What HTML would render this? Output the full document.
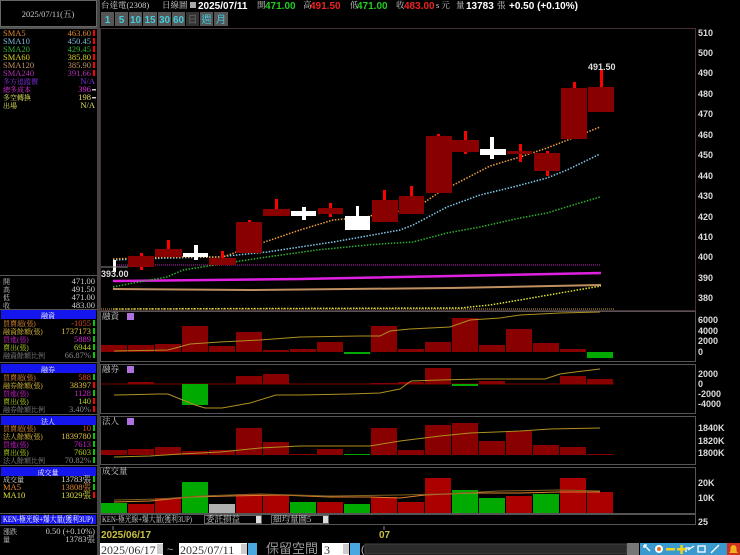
<!DOCTYPE html>
<html><head><meta charset="utf-8"><style>
html,body{margin:0;padding:0;background:#000;width:740px;height:555px;overflow:hidden}
svg{display:block}
.s{font-family:"Liberation Serif","Noto Serif CJK TC",serif;font-size:8.5px}
.l{font-size:7px}
.b{font-family:"Liberation Sans","Noto Sans CJK TC",sans-serif;font-weight:bold;font-size:10px}
.ax{font-family:"Liberation Sans",sans-serif;font-weight:bold;font-size:9px;fill:#ddd}
</style></head><body>
<svg width="740" height="555" viewBox="0 0 740 555" xmlns="http://www.w3.org/2000/svg">
<rect width="740" height="555" fill="#000"/>
<rect x="0.5" y="0.5" width="96" height="26" fill="#000" stroke="#666"/>
<text x="48" y="17" class="s" fill="#ccc" text-anchor="middle">2025/07/11(五)</text>
<rect x="97" y="0" width="3" height="555" fill="#444"/>
<rect x="0" y="27" width="97" height="2" fill="#555"/>
<g class="s">
<text x="3" y="36" fill="#e08a30">SMA5</text><text x="91" y="36" fill="#e08a30" text-anchor="end">463.60</text>
<text x="3" y="44" fill="#7ab8d8">SMA10</text><text x="91" y="44" fill="#7ab8d8" text-anchor="end">450.45</text>
<text x="3" y="52" fill="#30b030">SMA20</text><text x="91" y="52" fill="#30b030" text-anchor="end">429.45</text>
<text x="3" y="60" fill="#d8d020">SMA60</text><text x="91" y="60" fill="#d8d020" text-anchor="end">385.80</text>
<text x="3" y="68" fill="#c09060">SMA120</text><text x="91" y="68" fill="#c09060" text-anchor="end">385.90</text>
<text x="3" y="76" fill="#b030b0">SMA240</text><text x="91" y="76" fill="#b030b0" text-anchor="end">391.66</text>
<text x="3" y="84" class="l" fill="#8030e0">多方追蹤價</text><text x="95" y="84" fill="#8030e0" text-anchor="end">N/A</text>
<text x="3" y="92" class="l" fill="#e030e0">總多成本</text><text x="91" y="92" fill="#e030e0" text-anchor="end">396</text>
<text x="3" y="100" class="l" fill="#e0e060">多空轉換</text><text x="91" y="100" fill="#e0e060" text-anchor="end">198</text>
<text x="3" y="108" class="l" fill="#e0e060">出場</text><text x="95" y="108" fill="#e0e060" text-anchor="end">N/A</text>
</g>
<g fill="#f00"><rect x="93" y="30" width="2" height="6"/><rect x="93" y="38" width="2" height="6"/><rect x="93" y="46" width="2" height="6"/><rect x="93" y="54" width="2" height="6"/><rect x="93" y="62" width="2" height="6"/><rect x="93" y="70" width="2" height="6"/></g>
<rect x="92" y="89" width="4" height="1.5" fill="#ccc"/><rect x="92" y="97" width="4" height="1.5" fill="#ccc"/>

<rect x="0" y="275" width="97" height="1" fill="#555"/>
<g class="s" fill="#ccc">
<text x="3" y="284" class="l">開</text><text x="95" y="284" text-anchor="end">471.00</text>
<text x="3" y="292" class="l">高</text><text x="95" y="292" text-anchor="end">491.50</text>
<text x="3" y="300" class="l">低</text><text x="95" y="300" text-anchor="end">471.00</text>
<text x="3" y="308" class="l">收</text><text x="95" y="308" text-anchor="end">483.00</text>
</g>
<g fill="#1515ee">
<rect x="1" y="310" width="95" height="9"/><rect x="1" y="364" width="95" height="9"/><rect x="1" y="416" width="95" height="9"/><rect x="1" y="467" width="95" height="9"/><rect x="1" y="515" width="95" height="9"/>
</g>
<g stroke="#555"><line x1="0" y1="309.5" x2="97" y2="309.5"/><line x1="0" y1="362.5" x2="97" y2="362.5"/><line x1="0" y1="414.5" x2="97" y2="414.5"/><line x1="0" y1="465.5" x2="97" y2="465.5"/><line x1="0" y1="513.5" x2="97" y2="513.5"/><line x1="0" y1="525.5" x2="97" y2="525.5"/></g>
<g class="s l" fill="#fff" text-anchor="middle">
<text x="48" y="318">融資</text><text x="48" y="372">融券</text><text x="48" y="424">法人</text><text x="48" y="475">成交量</text>
</g>
<text x="3" y="522" class="s" fill="#fff" font-size="7" textLength="90" lengthAdjust="spacingAndGlyphs">KEN-極光線+爆大量(獲利3UP)</text>
<g class="s">
<text x="3" y="326" class="l" fill="#e08a30">買賣超(張)</text><text x="91" y="326" fill="#e05020" text-anchor="end">-1055</text>
<text x="3" y="334" class="l" fill="#e0c040">融資餘額(張)</text><text x="91" y="334" fill="#e0c040" text-anchor="end">1737173</text>
<text x="3" y="342" class="l" fill="#d020d0">買進(張)</text><text x="91" y="342" fill="#d020d0" text-anchor="end">5889</text>
<text x="3" y="350" class="l" fill="#b0d020">賣出(張)</text><text x="91" y="350" fill="#b0d020" text-anchor="end">6944</text>
<text x="3" y="358" class="l" fill="#888">融資餘額比例</text><text x="91" y="358" fill="#888" text-anchor="end">66.87%</text>
<text x="3" y="380" class="l" fill="#e08a30">買賣超(張)</text><text x="91" y="380" fill="#e05020" text-anchor="end">588</text>
<text x="3" y="388" class="l" fill="#e0c040">融券餘額(張)</text><text x="91" y="388" fill="#e0c040" text-anchor="end">38397</text>
<text x="3" y="396" class="l" fill="#d020d0">買進(張)</text><text x="91" y="396" fill="#d020d0" text-anchor="end">1128</text>
<text x="3" y="404" class="l" fill="#b0d020">賣出(張)</text><text x="91" y="404" fill="#b0d020" text-anchor="end">140</text>
<text x="3" y="412" class="l" fill="#888">融券餘額比例</text><text x="91" y="412" fill="#888" text-anchor="end">3.40%</text>
<text x="3" y="431" class="l" fill="#e08a30">買賣超(張)</text><text x="91" y="431" fill="#e05020" text-anchor="end">10</text>
<text x="3" y="439" class="l" fill="#e0c040">法人餘額(張)</text><text x="91" y="439" fill="#e0c040" text-anchor="end">1839780</text>
<text x="3" y="447" class="l" fill="#d020d0">買進(張)</text><text x="91" y="447" fill="#d020d0" text-anchor="end">7613</text>
<text x="3" y="455" class="l" fill="#b0d020">賣出(張)</text><text x="91" y="455" fill="#b0d020" text-anchor="end">7603</text>
<text x="3" y="463" class="l" fill="#888">法人餘額比例</text><text x="91" y="463" fill="#888" text-anchor="end">70.82%</text>
<text x="3" y="482" class="l" fill="#ddd">成交量</text><text x="91" y="482" fill="#ddd" text-anchor="end">13783張</text>
<text x="3" y="490" fill="#e08a30">MA5</text><text x="91" y="490" fill="#e08a30" text-anchor="end">13808張</text>
<text x="3" y="498" fill="#e0e040">MA10</text><text x="91" y="498" fill="#e0e040" text-anchor="end">13029張</text>
<text x="3" y="534" class="l" fill="#ccc">漲跌</text><text x="95" y="534" fill="#ccc" text-anchor="end">0.50 (+0.10%)</text>
<text x="3" y="542" class="l" fill="#ccc">量</text><text x="95" y="542" fill="#ccc" text-anchor="end">13783張</text>
</g>
<g fill="#0c0"><rect x="93" y="320" width="2" height="6"/><rect x="93" y="328" width="2" height="6"/><rect x="93" y="336" width="2" height="6"/><rect x="93" y="344" width="2" height="6"/><rect x="93" y="352" width="2" height="6"/><rect x="93" y="374" width="2" height="6"/><rect x="93" y="390" width="2" height="6"/><rect x="93" y="425" width="2" height="6"/><rect x="93" y="433" width="2" height="6"/><rect x="93" y="441" width="2" height="6"/><rect x="93" y="449" width="2" height="6"/><rect x="93" y="457" width="2" height="6"/><rect x="93" y="476" width="2" height="6"/><rect x="93" y="484" width="2" height="6"/></g>
<g fill="#f00"><rect x="93" y="382" width="2" height="6"/><rect x="93" y="398" width="2" height="6"/><rect x="93" y="406" width="2" height="6"/><rect x="93" y="492" width="2" height="6"/></g>

<g class="s" fill="#ccc"><text x="101" y="8">台達電(2308)</text><text x="162" y="8">日線圖</text></g>
<rect x="190" y="2" width="6" height="6" fill="#aaa"/>
<text x="198" y="9" class="b" fill="#fff">2025/07/11</text>
<text x="257" y="8" class="s" fill="#ccc">開</text><text x="265" y="9" class="b" fill="#2c2">471.00</text>
<text x="303" y="8" class="s" fill="#ccc">高</text><text x="310" y="9" class="b" fill="#e22">491.50</text>
<text x="350" y="8" class="s" fill="#ccc">低</text><text x="357" y="9" class="b" fill="#2c2">471.00</text>
<text x="396" y="8" class="s" fill="#ccc">收</text><text x="404" y="9" class="b" fill="#e22">483.00</text>
<text x="436" y="8" class="s" fill="#ccc">s 元</text>
<text x="456" y="8" class="s" fill="#ccc">量</text><text x="466" y="9" class="b" fill="#fff">13783</text>
<text x="497" y="8" class="s" fill="#ccc">張</text>
<text x="509" y="9" class="b" fill="#fff">+0.50 (+0.10%)</text>
<g fill="#555">
<rect x="101" y="12" width="13" height="14"/><rect x="115" y="12" width="13" height="14"/><rect x="129" y="12" width="13" height="14"/><rect x="143" y="12" width="14" height="14"/><rect x="158" y="12" width="13" height="14"/><rect x="172" y="12" width="13" height="14"/><rect x="186" y="12" width="13" height="14" fill="#333"/><rect x="200" y="12" width="13" height="14"/><rect x="214" y="12" width="14" height="14"/>
</g>
<g class="b" fill="#4cd" text-anchor="middle" font-size="9">
<text x="107.5" y="23">1</text><text x="121.5" y="23">5</text><text x="135.5" y="23">10</text><text x="150" y="23">15</text><text x="164.5" y="23">30</text><text x="178.5" y="23">60</text><text x="192.5" y="23" fill="#555">日</text><text x="206.5" y="23" font-weight="normal">週</text><text x="221" y="23" font-weight="normal">月</text>
</g>

<rect x="100.5" y="28.5" width="595" height="282" fill="none" stroke="#4a3036"/>
<g class="ax">
<text x="698" y="36">510</text><text x="698" y="56">500</text><text x="698" y="76">490</text><text x="698" y="97">480</text><text x="698" y="117">470</text><text x="698" y="138">460</text><text x="698" y="158">450</text><text x="698" y="179">440</text><text x="698" y="199">430</text><text x="698" y="220">420</text><text x="698" y="240">410</text><text x="698" y="260">400</text><text x="698" y="281">390</text><text x="698" y="301">380</text>
</g>
<line x1="113" y1="265" x2="601" y2="265" stroke="#801880" stroke-width="1.5" stroke-dasharray="1 1"/>
<polyline points="113,281 300,279 601,273" fill="none" stroke="#e020e0" stroke-width="2.5"/>
<polyline points="113,289 250,290 450,288 601,285" fill="none" stroke="#c09060" stroke-width="2"/>
<polyline points="113,309 460,308 490,305 520,300 560,293 601,286" fill="none" stroke="#e0e030" stroke-width="1.5" stroke-dasharray="1.5 1.5"/>
<polyline points="113,287 133,283 167,277 183,270 227,263 267,257 317,250 367,245 380,244 413,242 447,233 480,227 520,218 547,213 573,205 600,197" fill="none" stroke="#30b030" stroke-width="1.5" stroke-dasharray="1.5 1.5"/>
<polyline points="113,260 167,258 217,257 267,252 333,242 367,236 400,230 413,225 447,207 480,195 513,187 547,178 567,170 600,154" fill="none" stroke="#80c8e8" stroke-width="1.5" stroke-dasharray="1.5 1.5"/>
<polyline points="113,259 167,257 223,257 250,247 300,230 333,220 367,217 380,213 412,210 425,202 438,193 463,180 490,166 520,157 547,148 573,138 600,127" fill="none" stroke="#f0a040" stroke-width="1.5" stroke-dasharray="1.5 1.5"/>
<g fill="#f00">
<rect x="140" y="253" width="3" height="17"/><rect x="167" y="240" width="3" height="10"/><rect x="221" y="251" width="3" height="8"/><rect x="248" y="220" width="3" height="3"/><rect x="275" y="199" width="3" height="11"/><rect x="329" y="203" width="3" height="14"/><rect x="383" y="190" width="3" height="11"/><rect x="410" y="186" width="3" height="11"/><rect x="437" y="134" width="3" height="3"/><rect x="464" y="131" width="3" height="23"/><rect x="519" y="144" width="3" height="18"/><rect x="546" y="151" width="3" height="25"/><rect x="573" y="82" width="3" height="7"/><rect x="600" y="70" width="3" height="18"/>
</g>
<g fill="#880000">
<rect x="128" y="256" width="26" height="11"/><rect x="155" y="249" width="27" height="8"/><rect x="209" y="258" width="27" height="7"/><rect x="236" y="222" width="26" height="31"/><rect x="263" y="209" width="27" height="7"/><rect x="318" y="208" width="25" height="6"/><rect x="372" y="200" width="26" height="22"/><rect x="399" y="196" width="25" height="18"/><rect x="426" y="136" width="26" height="57"/><rect x="452" y="140" width="27" height="12"/><rect x="507" y="151" width="25" height="3"/><rect x="534" y="153" width="26" height="18"/><rect x="561" y="88" width="26" height="51"/><rect x="588" y="87" width="26" height="25"/>
</g>
<g fill="#fff">
<rect x="113" y="260" width="3" height="12"/>
<rect x="183" y="253" width="25" height="4"/><rect x="194" y="245" width="4" height="15"/>
<rect x="291" y="211" width="25" height="5"/><rect x="302" y="207" width="4" height="13"/>
<rect x="345" y="216" width="25" height="14"/><rect x="356" y="206" width="3" height="10"/>
<rect x="480" y="149" width="26" height="6"/><rect x="490" y="137" width="4" height="22"/>
</g>
<line x1="101" y1="267" x2="128" y2="267" stroke="#888"/>
<text x="101" y="277" class="ax" fill="#eee">393.00</text>
<text x="588" y="70" class="ax" fill="#eee">491.50</text>
<line x1="101" y1="309" x2="614" y2="309" stroke="#c8b040" stroke-dasharray="1 1"/>

<g fill="none" stroke="#555">
<rect x="100.5" y="311.5" width="595" height="50"/><rect x="100.5" y="364.5" width="595" height="49"/><rect x="100.5" y="416.5" width="595" height="48"/><rect x="100.5" y="467.5" width="595" height="46"/><rect x="100.5" y="514.5" width="595" height="10"/>
</g>
<g class="s" fill="#ccc" font-size="7">
<text x="102" y="319">融資</text><text x="102" y="372">融券</text><text x="102" y="424">法人</text><text x="102" y="474">成交量</text>
</g>
<g fill="#b070e0"><rect x="127" y="313" width="7" height="7"/><rect x="127" y="366" width="7" height="7"/><rect x="127" y="418" width="7" height="7"/></g>
<g fill="#880000">
<rect x="101" y="345" width="26" height="7"/><rect x="128" y="345" width="26" height="7"/><rect x="155" y="344" width="26" height="8"/><rect x="182" y="326" width="26" height="26"/><rect x="209" y="346" width="26" height="6"/><rect x="236" y="332" width="26" height="20"/><rect x="263" y="350" width="26" height="2"/><rect x="290" y="349" width="26" height="3"/><rect x="317" y="342" width="26" height="10"/><rect x="371" y="326" width="26" height="26"/><rect x="398" y="349" width="26" height="3"/><rect x="425" y="342" width="26" height="10"/><rect x="452" y="318" width="26" height="34"/><rect x="479" y="345" width="26" height="7"/><rect x="506" y="329" width="26" height="23"/><rect x="533" y="343" width="26" height="9"/><rect x="560" y="349" width="26" height="3"/>
</g>
<g fill="#0a0"><rect x="344" y="352" width="26" height="2"/><rect x="587" y="352" width="26" height="6"/></g>
<polyline points="114,351 168,350 190,344 220,342 260,340 300,337 360,336 380,336 390,331 410,329 450,327 470,320 500,318 520,315 560,313 600,312" fill="none" stroke="#b09020" stroke-width="1"/>
<g class="ax"><text x="698" y="323">6000</text><text x="698" y="334">4000</text><text x="698" y="344">2000</text><text x="698" y="355">0</text></g>
<line x1="101" y1="384" x2="614" y2="384" stroke="#500" stroke-width="1.5"/>
<g fill="#880000">
<rect x="128" y="382" width="26" height="2"/><rect x="236" y="376" width="26" height="8"/><rect x="263" y="374" width="26" height="10"/><rect x="371" y="383" width="26" height="1"/><rect x="398" y="382" width="26" height="2"/><rect x="425" y="368" width="26" height="16"/><rect x="479" y="381" width="26" height="3"/><rect x="560" y="376" width="26" height="8"/><rect x="587" y="379" width="26" height="5"/>
</g>
<g fill="#0a0"><rect x="182" y="384" width="26" height="21"/><rect x="452" y="384" width="26" height="2"/></g>
<polyline points="114,395 160,394 168,394 195,405 205,408 222,408 250,403 276,395 300,395 350,394 380,393 400,389 411,381 440,380 480,379 545,379 560,374 575,372 600,369" fill="none" stroke="#b09020" stroke-width="1"/>
<g class="ax"><text x="698" y="377">2000</text><text x="698" y="387">0</text><text x="698" y="397">-2000</text><text x="698" y="407">-4000</text></g>
<g fill="#880000">
<rect x="101" y="450" width="26" height="5"/><rect x="128" y="449" width="26" height="6"/><rect x="155" y="447" width="26" height="8"/><rect x="182" y="451" width="26" height="4"/><rect x="209" y="450" width="26" height="5"/><rect x="236" y="428" width="26" height="27"/><rect x="263" y="442" width="26" height="13"/><rect x="290" y="454" width="26" height="1"/><rect x="317" y="449" width="26" height="6"/><rect x="371" y="428" width="26" height="27"/><rect x="398" y="450" width="26" height="5"/><rect x="425" y="425" width="26" height="30"/><rect x="452" y="423" width="26" height="32"/><rect x="479" y="441" width="26" height="14"/><rect x="506" y="431" width="26" height="24"/><rect x="533" y="445" width="26" height="10"/><rect x="560" y="447" width="26" height="8"/><rect x="587" y="454" width="26" height="1"/>
</g>
<rect x="344" y="454" width="26" height="1" fill="#0a0"/>
<polyline points="114,457 150,456 180,454 220,452 260,448 300,446 330,446 370,446 400,441 440,436 470,433 520,431 550,429 600,428" fill="none" stroke="#b09020" stroke-width="1"/>
<g class="ax"><text x="698" y="431">1840K</text><text x="698" y="444">1820K</text><text x="698" y="456">1800K</text></g>
<g fill="#aa0000">
<rect x="128" y="504" width="26" height="9"/><rect x="155" y="498" width="26" height="15"/><rect x="236" y="494" width="26" height="19"/><rect x="263" y="495" width="26" height="18"/><rect x="317" y="502" width="26" height="11"/><rect x="371" y="497" width="26" height="16"/><rect x="398" y="502" width="26" height="11"/><rect x="425" y="478" width="26" height="35"/><rect x="506" y="496" width="26" height="17"/><rect x="560" y="478" width="26" height="35"/><rect x="587" y="492" width="26" height="21"/>
</g>
<g fill="#0a0"><rect x="101" y="503" width="26" height="10"/><rect x="182" y="482" width="26" height="31"/><rect x="290" y="502" width="26" height="11"/><rect x="344" y="504" width="26" height="9"/><rect x="452" y="490" width="26" height="23"/><rect x="479" y="498" width="26" height="15"/><rect x="533" y="494" width="26" height="19"/></g>
<rect x="209" y="504" width="26" height="9" fill="#b0b0b0"/>
<polyline points="114,502 150,501 190,497 230,496 280,495 330,497 370,497 400,498 425,495 470,493 520,493 560,492 600,492" fill="none" stroke="#e08030" stroke-width="1"/>
<polyline points="114,500 160,499 200,496 260,494 330,496 400,495 440,494 500,491 560,490 600,491" fill="none" stroke="#806020" stroke-width="1"/>
<g class="ax"><text x="698" y="486">20K</text><text x="698" y="501">10K</text><text x="698" y="525">25</text></g>
<text x="102" y="522" class="s" fill="#ccc" font-size="7" textLength="90" lengthAdjust="spacingAndGlyphs">KEN-極光線+爆大量(獲利3UP)</text>
<rect x="204.5" y="515.5" width="57" height="8" fill="#000" stroke="#666"/><text x="206" y="522" class="s" fill="#ccc" font-size="6.5">委託損益</text><rect x="256" y="516" width="5" height="7" fill="#ddd"/>
<rect x="271.5" y="515.5" width="57" height="8" fill="#000" stroke="#666"/><text x="273" y="522" class="s" fill="#ccc" font-size="6.5">細均量圖5</text><rect x="323" y="516" width="5" height="7" fill="#ddd"/>
<line x1="113" y1="526" x2="113" y2="530" stroke="#888"/><line x1="384" y1="526" x2="384" y2="530" stroke="#888"/>
<text x="101" y="538" class="b" fill="#c8c040" font-size="9" font-weight="normal">2025/06/17</text>
<text x="379" y="538" class="b" fill="#c8c040" font-size="9" font-weight="normal">07</text>
<rect x="100" y="543" width="63" height="12" fill="#fff"/><rect x="157" y="544" width="6" height="10" fill="#ccc"/>
<text x="101" y="554" font-family="Liberation Serif,serif" font-size="12" fill="#333">2025/06/17</text>
<text x="167" y="553" font-family="Liberation Sans,sans-serif" font-size="11" fill="#aaa">~</text>
<rect x="179" y="543" width="68" height="12" fill="#fff"/><rect x="241" y="544" width="6" height="10" fill="#ccc"/>
<text x="180" y="554" font-family="Liberation Serif,serif" font-size="12" fill="#333">2025/07/11</text>
<rect x="248" y="543" width="9" height="12" fill="#4aa8e0"/>
<text x="266" y="553" font-family="Noto Sans CJK TC,sans-serif" font-size="13" fill="#999">保留空間</text>
<rect x="322" y="543" width="27" height="12" fill="#fff"/><rect x="343" y="544" width="6" height="10" fill="#ccc"/>
<text x="324" y="554" font-family="Liberation Serif,serif" font-size="12" fill="#333">3</text>
<rect x="350" y="543" width="10" height="12" fill="#4aa8e0"/>
<text x="361" y="553" font-family="Liberation Sans,sans-serif" font-size="10" fill="#ccc">(</text>
<rect x="365" y="544" width="262" height="10" fill="#2a2a2a" stroke="#444"/>
<rect x="627" y="543" width="12" height="12" fill="#777"/>
<rect x="640" y="543" width="88" height="12" fill="#3a9ad0"/>
<g stroke="#fff" stroke-width="1.3" fill="none">
<path d="M644 545 L650 551 M644 545 h3 M644 545 v3"/>
<path d="M686 552 v-4 h4 M688 550 l6 -4"/>
<rect x="698" y="546" width="7" height="6"/>
<path d="M711 553 l8 -8"/>
</g>
<circle cx="659" cy="549" r="4" fill="#fff"/><circle cx="659" cy="549" r="2" fill="#e07020"/>
<rect x="666" y="548" width="9" height="2.5" fill="#f0d020"/>
<rect x="677" y="548" width="9" height="2.5" fill="#f0d020"/><rect x="680.3" y="545" width="2.5" height="9" fill="#f0d020"/>
<rect x="727" y="543" width="13" height="12" fill="#d03020"/>
<path d="M729 553 h9 l-1.5 -2 v-3 a3 3 0 0 0 -6 0 v3 z" fill="#f0b020"/>
</svg>
</body></html>
